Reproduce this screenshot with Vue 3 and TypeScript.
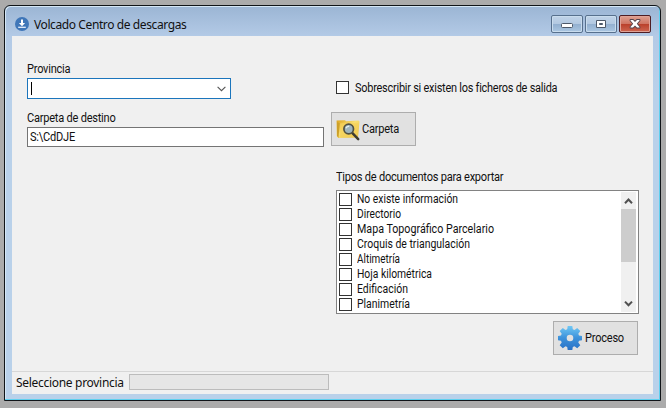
<script setup lang="ts">
import { ref } from 'vue'

interface DocumentType {
  name: string
  width: number
  checked: boolean
}

const province = ref('')
const folder = ref('S:\\CdDJE')
const overwrite = ref(false)
const documentTypes = ref<DocumentType[]>([
  { name: 'No existe información', width: 101, checked: false },
  { name: 'Directorio', width: 44, checked: false },
  { name: 'Mapa Topográfico Parcelario', width: 137, checked: false },
  { name: 'Croquis de triangulación', width: 113, checked: false },
  { name: 'Altimetría', width: 43, checked: false },
  { name: 'Hoja kilométrica', width: 75, checked: false },
  { name: 'Edificación', width: 51, checked: false },
  { name: 'Planimetría', width: 53, checked: false },
])
</script>

<template>
  <div class="desktop">
    <div class="window">
      <header class="titlebar">
        <svg class="app-icon" viewBox="0 0 14 14">
          <circle cx="7" cy="7" r="7" fill="#3f76b8" />
          <path d="M6 2.500h2v3.600h2.100L7 9.200 3.900 6.100H6z" fill="#fff" />
          <path d="M3.200 10.300h7.600" stroke="#e4eefa" stroke-width="1.300" />
        </svg>
        <span class="title">Volcado Centro de descargas</span>
        <div class="controls">
          <button class="control">
            <svg viewBox="0 0 30 16"><rect x="9.500" y="7.500" width="11" height="4" rx="1" fill="#fff" stroke="#4d5868" /></svg>
          </button>
          <button class="control">
            <svg viewBox="0 0 30 16"><path fill-rule="evenodd" d="M10.500 4.500h9v7h-9z M13.500 7.500h3v1h-3z" fill="#fff" stroke="#4d5868" /></svg>
          </button>
          <button class="control close">
            <svg viewBox="0 0 30 16">
              <path d="M10.500 4 13 4 15 6 17 4 19.500 4 19.500 4.500 16.800 7.750 19.500 11 19.500 11.500 17 11.500 15 9.500 13 11.500 10.500 11.500 10.500 11 13.200 7.750 10.500 4.500z" fill="#fff" stroke="#53434c" stroke-width="1.800" stroke-linejoin="round" paint-order="stroke" />
            </svg>
          </button>
        </div>
      </header>

      <main class="client">
        <div class="form">
          <section class="left">
            <label class="label province-label">Provincia</label>
            <div class="combo">
              <span class="caret"></span>{{ province }}
              <svg class="chevron" viewBox="0 0 9 6"><path d="M.6.8 4.500 4.700 8.400.8" fill="none" stroke="#555" stroke-width="1.100" /></svg>
            </div>
            <label class="label folder-label">Carpeta de destino</label>
            <div class="textbox"><span class="label">{{ folder }}</span></div>
          </section>

          <section class="right">
            <label class="overwrite" @click="overwrite = !overwrite">
              <span class="box" :class="{ checked: overwrite }"></span>
              <span class="label overwrite-label">Sobrescribir si existen los ficheros de salida</span>
            </label>
            <button class="action folder-button">
              <svg class="folder-icon" viewBox="0 0 24 22">
                <defs>
                  <linearGradient id="folder" x1="0" y1="0" x2="1" y2="1">
                    <stop offset="0" stop-color="#dda51f" />
                    <stop offset=".45" stop-color="#f9df72" />
                    <stop offset="1" stop-color="#e5b52f" />
                  </linearGradient>
                </defs>
                <path d="M.6 1.500 9 1.200l1 1 12.500-.7 1 1L22 18.500 2.200 19 .7 17z" fill="url(#folder)" />
                <path d="M1 3v14l1.500 2L3.700 4z" fill="#cda029" />
                <path d="M4 4.500 10 3.500l12.600 1-1 13.800L4.400 18z" fill="#f4d25c" opacity=".75" />
                <path d="m16.200 13.800 6 6.300" stroke="#3e3c30" stroke-width="2.500" stroke-linecap="round" />
                <circle cx="12.700" cy="10" r="4.800" fill="#9eb5be" stroke="#515142" stroke-width="1.700" />
                <path d="M10 9.300c.4-1.400 1.500-2 3.200-2" fill="none" stroke="#e4f0f1" stroke-width="1.400" />
              </svg>
              <span class="label">Carpeta</span>
            </button>
            <label class="label types-label">Tipos de documentos para exportar</label>
            <div class="listbox">
              <ul class="items">
                <li v-for="item in documentTypes" :key="item.name" @click="item.checked = !item.checked">
                  <span class="box" :class="{ checked: item.checked }"></span>
                  <svg class="item-text" height="15" width="150"><text x="0" y="11.200" :textLength="item.width" lengthAdjust="spacingAndGlyphs">{{ item.name }}</text></svg>
                </li>
              </ul>
              <div class="scrollbar">
                <svg class="arrow" viewBox="0 0 15 17"><path d="m4 11.200 3.500-3.700 3.500 3.700" fill="none" stroke="#505050" stroke-width="2" /></svg>
                <div class="thumb"></div>
                <svg class="arrow down" viewBox="0 0 15 17"><path d="m4 6.600 3.500 3.700 3.500-3.700" fill="none" stroke="#505050" stroke-width="2" /></svg>
              </div>
            </div>
            <button class="action process-button">
              <svg class="gear-icon" viewBox="0 0 24 24">
                <defs>
                  <linearGradient id="gear" x1="0" y1="0" x2="0" y2="1">
                    <stop offset="0" stop-color="#70c8f5" />
                    <stop offset=".5" stop-color="#3c91da" />
                    <stop offset="1" stop-color="#2871c6" />
                  </linearGradient>
                </defs>
                <path fill="url(#gear)" fill-rule="evenodd" d="M9.700 0h4.600l.5 3.300 1.700.7 2.700-2 3.100 3.100-2 2.700.7 1.700 3 .5v4.300l-3 .5-.7 1.700 2 2.700-3.100 3.100-2.700-2-1.700.7-.5 3H9.700l-.5-3-1.700-.7-2.700 2-3.100-3.100 2-2.700-.7-1.700-3-.5V10l3-.5.7-1.700-2-2.700L4.800 2l2.700 2 1.700-.7zM12 8.700a3.300 3.300 0 1 0 0 6.600 3.300 3.300 0 0 0 0-6.600z" />
              </svg>
              <span class="label">Proceso</span>
            </button>
          </section>
        </div>

        <footer class="statusbar">
          <span class="status-text">Seleccione provincia</span>
          <div class="progress"></div>
        </footer>
      </main>
    </div>
  </div>
</template>

<style>
body {
  margin: 0;
}
</style>

<style scoped>
* {
  box-sizing: border-box;
}
.desktop {
  width: 666px;
  height: 408px;
  padding: 5px 5px 7px 4px;
  background: #ababab;
  overflow: hidden;
  color: #111;
  font: 12px/15px Roboto, "Liberation Sans", sans-serif;
}
.window {
  width: 657px;
  height: 396px;
  padding: 0 7px 7px;
  border: 1px solid #101418;
  border-radius: 6px 6px 0 0;
  background: linear-gradient(#9bb5d4, #b3cae6 30px, #b9d1ea 90px, #b9d1ea);
  box-shadow: inset -1px -1px #5fd0ef, inset 1px 1px #d5e7f5;
  display: flex;
  flex-direction: column;
}
.titlebar {
  height: 30px;
  display: flex;
  flex: none;
  align-items: center;
  padding-left: 3px;
}
.app-icon {
  width: 14px;
  height: 14px;
  margin-top: 6px;
}
.title {
  margin: 8px 0 0 5px;
  font: 12px/16px "Noto Sans", sans-serif;
  letter-spacing: -0.4px;
  white-space: nowrap;
}
.controls {
  display: flex;
  gap: 2px;
  margin: 6px 2px 0 auto;
}
.control {
  width: 32px;
  height: 18px;
  padding: 0;
  border: 1px solid #57708d;
  border-radius: 2px;
  background: linear-gradient(#c0d3e8, #b3c9e1 48%, #92afcf 50%, #abc7e2);
  box-shadow: inset 0 0 0 1px #c9dced;
}
.control svg {
  display: block;
  width: 30px;
  height: 16px;
}
.close {
  border-color: #4e1d23;
  background: linear-gradient(#dfa091, #cf7563 48%, #b93f2a 50%, #ce6651);
  box-shadow: inset 0 0 0 1px #dfa296;
}
.client {
  flex: 1;
  display: flex;
  flex-direction: column;
  background: #f0f0f0;
}
.form {
  height: 335px;
  display: flex;
  justify-content: space-between;
  padding: 0 14px 0 15px;
}
.left {
  width: 297px;
  padding-top: 26px;
}
.label {
  display: block;
  letter-spacing: -0.25px;
  white-space: nowrap;
  transform: scaleX(0.92);
  transform-origin: left;
}
.overwrite-label {
  position: relative;
  top: 1px;
  transform: scaleX(0.91);
}
.province-label {
  height: 16px;
}
.combo {
  width: 204px;
  height: 21px;
  padding: 3px 4px 3px 3px;
  border: 1px solid #1b75bc;
  background: #fff;
  display: flex;
  align-items: center;
}
.caret {
  width: 1px;
  height: 13px;
  background: #000;
}
.chevron {
  width: 9px;
  height: 6px;
  margin-left: auto;
}
.folder-label {
  margin-top: 12px;
  height: 16px;
}
.textbox {
  height: 20px;
  padding: 2px;
  border: 1px solid #747474;
  background: #fff;
}
.right {
  width: 308px;
  padding: 45px 0 0 5px;
  display: flex;
  flex-direction: column;
}
.overwrite {
  height: 13px;
  display: flex;
  align-items: center;
  gap: 6px;
}
.box {
  flex: none;
  width: 13px;
  height: 13px;
  border: 1px solid #333;
  background: #fff;
}
.checked {
  box-shadow: inset 0 0 0 3px #fff;
  background: #333;
}
.action {
  width: 85px;
  height: 34px;
  padding: 0;
  border: 1px solid #adadad;
  background: #e1e1e1;
  color: #111;
  font: inherit;
  display: flex;
  align-items: center;
}
.folder-button {
  margin: 18px 0 0 -5px;
}
.folder-icon {
  width: 24px;
  height: 22px;
  margin: 2px 2px 0 4px;
}
.types-label {
  margin-top: 24px;
  height: 20px;
}
.listbox {
  height: 124px;
  padding: 1px 2px;
  border: 1px solid #828282;
  background: #fff;
  display: flex;
  justify-content: space-between;
}
.items {
  margin: 0;
  padding: 0;
  list-style: none;
}
.items li {
  height: 15px;
  display: flex;
  align-items: center;
  gap: 5px;
}
.item-text {
  display: block;
  fill: #111;
}
.scrollbar {
  width: 15px;
  background: #f0f0f0;
  display: flex;
  flex-direction: column;
}
.arrow {
  width: 15px;
  height: 17px;
}
.thumb {
  height: 53px;
  background: #cdcdcd;
}
.down {
  margin-top: auto;
}
.process-button {
  margin: 7px 1px 0 auto;
}
.gear-icon {
  width: 24px;
  height: 24px;
  margin: 0 3px 0 4px;
}
.statusbar {
  flex: 1;
  border-top: 1px solid #d7d7d7;
  padding: 2px 4px;
  display: flex;
  align-items: flex-start;
}
.status-text {
  width: 113px;
  font: 12px/18px "Noto Sans", sans-serif;
  letter-spacing: -0.3px;
  white-space: nowrap;
}
.progress {
  width: 200px;
  height: 16px;
  border: 1px solid #bcbcbc;
  background: #e6e6e6;
}
</style>
